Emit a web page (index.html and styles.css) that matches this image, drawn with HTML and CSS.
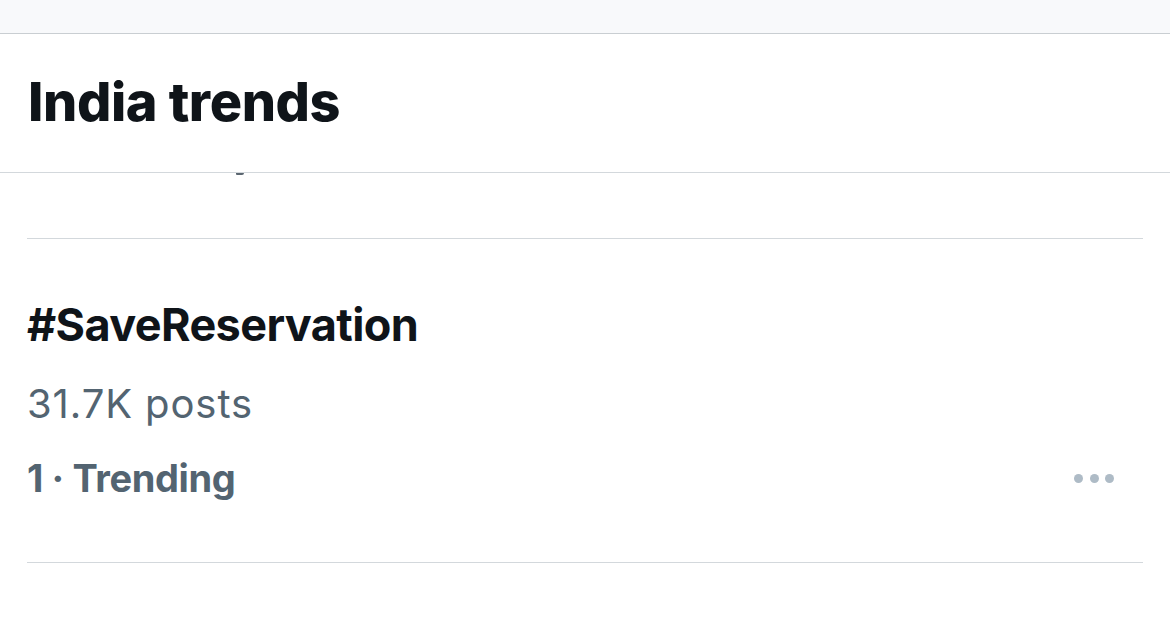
FILE: index.html
```html
<!DOCTYPE html>
<html>
<head>
<meta charset="utf-8">
<link rel="stylesheet" href="styles.css">
</head>
<body>
<div class="topbar"></div>
<header class="header">
  <h1 class="title">India trends</h1>
</header>
<main class="list">
  <div class="spacer">
    <div class="ghost"></div>
  </div>
  <div class="trend">
    <div class="trend-name">#SaveReservation</div>
    <div class="trend-count">31.7K posts</div>
    <div class="trend-meta">
      <span class="rank">1 · Trending</span>
      <span class="more" aria-label="More"><i></i><i></i><i></i></span>
    </div>
  </div>
</main>
</body>
</html>
```

FILE: styles.css
```css
* { box-sizing: border-box; }
html, body { margin: 0; padding: 0; background: #fff; }
body {
  font-family: Inter, "Noto Sans", "Liberation Sans", sans-serif;
  color: #0f1419;
  width: 1170px;
  height: 624px;
  overflow: hidden;
}
.topbar {
  height: 34px;
  background: #f8f9fb;
  border-bottom: 1px solid #c9ced2;
}
.header {
  height: 139px;
  padding: 38px 28px 0;
  border-bottom: 1px solid #d3d8dc;
}
.title {
  margin: 0;
  font-size: 54px;
  line-height: 60px;
  font-weight: 800;
  letter-spacing: -0.4px;
}
.list {
  margin: 0 27px;
}
.spacer {
  height: 66px;
  border-bottom: 1px solid #d3d8dc;
}
.ghost {
  width: 8px;
  height: 2px;
  margin-left: 209px;
  background: #5b6670;
  border-radius: 0 0 2px 1px;
}
.trend {
  height: 324px;
  padding-top: 48px;
  border-bottom: 1px solid #d3d8dc;
}
.trend-name {
  font-size: 45px;
  line-height: 76px;
  font-weight: 700;
  letter-spacing: -0.6px;
}
.trend-count {
  margin-top: 3px;
  font-size: 40px;
  line-height: 76px;
  color: #536471;
  letter-spacing: 0.9px;
}
.trend-meta {
  display: flex;
  align-items: center;
  justify-content: space-between;
  height: 76px;
  margin-top: -2px;
}
.rank {
  font-size: 38px;
  line-height: 76px;
  font-weight: 700;
  color: #536471;
  letter-spacing: -0.4px;
}
.more {
  display: flex;
  gap: 6.5px;
  margin-right: 29px;
  margin-top: 0;
}
.more i {
  width: 9px;
  height: 9px;
  border-radius: 50%;
  background: #aebbc6;
}
```
